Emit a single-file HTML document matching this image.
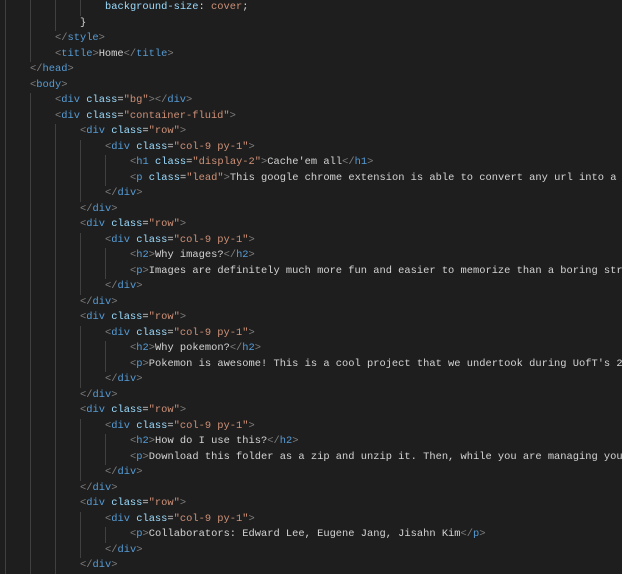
<!DOCTYPE html>
<html><head><meta charset="utf-8"><style>
html,body{margin:0;padding:0;background:#1e1e1e;width:622px;height:573px;overflow:hidden}
#c{position:absolute;left:0;top:0.25px;width:700px;font-family:"Liberation Mono",monospace;font-size:10.4px;line-height:15.5px;color:#d4d4d4;white-space:normal}
.l{height:15.5px;white-space:pre;background-image:repeating-linear-gradient(to right,#404040 0 1px,transparent 1px 25px);background-repeat:no-repeat;background-position:5px 0}
.b{color:#808080}.t{color:#569cd6}.a{color:#9cdcfe}.s{color:#ce9178}
</style></head><body><div id="c"><div class="l" style="padding-left:105px;background-size:100px 100%"><span class="a">background-size</span>: <span class="s">cover</span>;</div><div class="l" style="padding-left:80px;background-size:75px 100%">}</div><div class="l" style="padding-left:55px;background-size:50px 100%"><span class="b">&lt;/</span><span class="t">style</span><span class="b">&gt;</span></div><div class="l" style="padding-left:55px;background-size:50px 100%"><span class="b">&lt;</span><span class="t">title</span><span class="b">&gt;</span>Home<span class="b">&lt;/</span><span class="t">title</span><span class="b">&gt;</span></div><div class="l" style="padding-left:30px;background-size:25px 100%"><span class="b">&lt;/</span><span class="t">head</span><span class="b">&gt;</span></div><div class="l" style="padding-left:30px;background-size:25px 100%"><span class="b">&lt;</span><span class="t">body</span><span class="b">&gt;</span></div><div class="l" style="padding-left:55px;background-size:50px 100%"><span class="b">&lt;</span><span class="t">div</span> <span class="a">class</span>=<span class="s">"bg"</span><span class="b">&gt;&lt;/</span><span class="t">div</span><span class="b">&gt;</span></div><div class="l" style="padding-left:55px;background-size:50px 100%"><span class="b">&lt;</span><span class="t">div</span> <span class="a">class</span>=<span class="s">"container-fluid"</span><span class="b">&gt;</span></div><div class="l" style="padding-left:80px;background-size:75px 100%"><span class="b">&lt;</span><span class="t">div</span> <span class="a">class</span>=<span class="s">"row"</span><span class="b">&gt;</span></div><div class="l" style="padding-left:105px;background-size:100px 100%"><span class="b">&lt;</span><span class="t">div</span> <span class="a">class</span>=<span class="s">"col-9 py-1"</span><span class="b">&gt;</span></div><div class="l" style="padding-left:130px;background-size:125px 100%"><span class="b">&lt;</span><span class="t">h1</span> <span class="a">class</span>=<span class="s">"display-2"</span><span class="b">&gt;</span>Cache'em all<span class="b">&lt;/</span><span class="t">h1</span><span class="b">&gt;</span></div><div class="l" style="padding-left:130px;background-size:125px 100%"><span class="b">&lt;</span><span class="t">p</span> <span class="a">class</span>=<span class="s">"lead"</span><span class="b">&gt;</span>This google chrome extension is able to convert any url into a</div><div class="l" style="padding-left:105px;background-size:100px 100%"><span class="b">&lt;/</span><span class="t">div</span><span class="b">&gt;</span></div><div class="l" style="padding-left:80px;background-size:75px 100%"><span class="b">&lt;/</span><span class="t">div</span><span class="b">&gt;</span></div><div class="l" style="padding-left:80px;background-size:75px 100%"><span class="b">&lt;</span><span class="t">div</span> <span class="a">class</span>=<span class="s">"row"</span><span class="b">&gt;</span></div><div class="l" style="padding-left:105px;background-size:100px 100%"><span class="b">&lt;</span><span class="t">div</span> <span class="a">class</span>=<span class="s">"col-9 py-1"</span><span class="b">&gt;</span></div><div class="l" style="padding-left:130px;background-size:125px 100%"><span class="b">&lt;</span><span class="t">h2</span><span class="b">&gt;</span>Why images?<span class="b">&lt;/</span><span class="t">h2</span><span class="b">&gt;</span></div><div class="l" style="padding-left:130px;background-size:125px 100%"><span class="b">&lt;</span><span class="t">p</span><span class="b">&gt;</span>Images are definitely much more fun and easier to memorize than a boring str</div><div class="l" style="padding-left:105px;background-size:100px 100%"><span class="b">&lt;/</span><span class="t">div</span><span class="b">&gt;</span></div><div class="l" style="padding-left:80px;background-size:75px 100%"><span class="b">&lt;/</span><span class="t">div</span><span class="b">&gt;</span></div><div class="l" style="padding-left:80px;background-size:75px 100%"><span class="b">&lt;</span><span class="t">div</span> <span class="a">class</span>=<span class="s">"row"</span><span class="b">&gt;</span></div><div class="l" style="padding-left:105px;background-size:100px 100%"><span class="b">&lt;</span><span class="t">div</span> <span class="a">class</span>=<span class="s">"col-9 py-1"</span><span class="b">&gt;</span></div><div class="l" style="padding-left:130px;background-size:125px 100%"><span class="b">&lt;</span><span class="t">h2</span><span class="b">&gt;</span>Why pokemon?<span class="b">&lt;/</span><span class="t">h2</span><span class="b">&gt;</span></div><div class="l" style="padding-left:130px;background-size:125px 100%"><span class="b">&lt;</span><span class="t">p</span><span class="b">&gt;</span>Pokemon is awesome! This is a cool project that we undertook during UofT's 2</div><div class="l" style="padding-left:105px;background-size:100px 100%"><span class="b">&lt;/</span><span class="t">div</span><span class="b">&gt;</span></div><div class="l" style="padding-left:80px;background-size:75px 100%"><span class="b">&lt;/</span><span class="t">div</span><span class="b">&gt;</span></div><div class="l" style="padding-left:80px;background-size:75px 100%"><span class="b">&lt;</span><span class="t">div</span> <span class="a">class</span>=<span class="s">"row"</span><span class="b">&gt;</span></div><div class="l" style="padding-left:105px;background-size:100px 100%"><span class="b">&lt;</span><span class="t">div</span> <span class="a">class</span>=<span class="s">"col-9 py-1"</span><span class="b">&gt;</span></div><div class="l" style="padding-left:130px;background-size:125px 100%"><span class="b">&lt;</span><span class="t">h2</span><span class="b">&gt;</span>How do I use this?<span class="b">&lt;/</span><span class="t">h2</span><span class="b">&gt;</span></div><div class="l" style="padding-left:130px;background-size:125px 100%"><span class="b">&lt;</span><span class="t">p</span><span class="b">&gt;</span>Download this folder as a zip and unzip it. Then, while you are managing you</div><div class="l" style="padding-left:105px;background-size:100px 100%"><span class="b">&lt;/</span><span class="t">div</span><span class="b">&gt;</span></div><div class="l" style="padding-left:80px;background-size:75px 100%"><span class="b">&lt;/</span><span class="t">div</span><span class="b">&gt;</span></div><div class="l" style="padding-left:80px;background-size:75px 100%"><span class="b">&lt;</span><span class="t">div</span> <span class="a">class</span>=<span class="s">"row"</span><span class="b">&gt;</span></div><div class="l" style="padding-left:105px;background-size:100px 100%"><span class="b">&lt;</span><span class="t">div</span> <span class="a">class</span>=<span class="s">"col-9 py-1"</span><span class="b">&gt;</span></div><div class="l" style="padding-left:130px;background-size:125px 100%"><span class="b">&lt;</span><span class="t">p</span><span class="b">&gt;</span>Collaborators: Edward Lee, Eugene Jang, Jisahn Kim<span class="b">&lt;/</span><span class="t">p</span><span class="b">&gt;</span></div><div class="l" style="padding-left:105px;background-size:100px 100%"><span class="b">&lt;/</span><span class="t">div</span><span class="b">&gt;</span></div><div class="l" style="padding-left:80px;background-size:75px 100%"><span class="b">&lt;/</span><span class="t">div</span><span class="b">&gt;</span></div></div></body></html>
